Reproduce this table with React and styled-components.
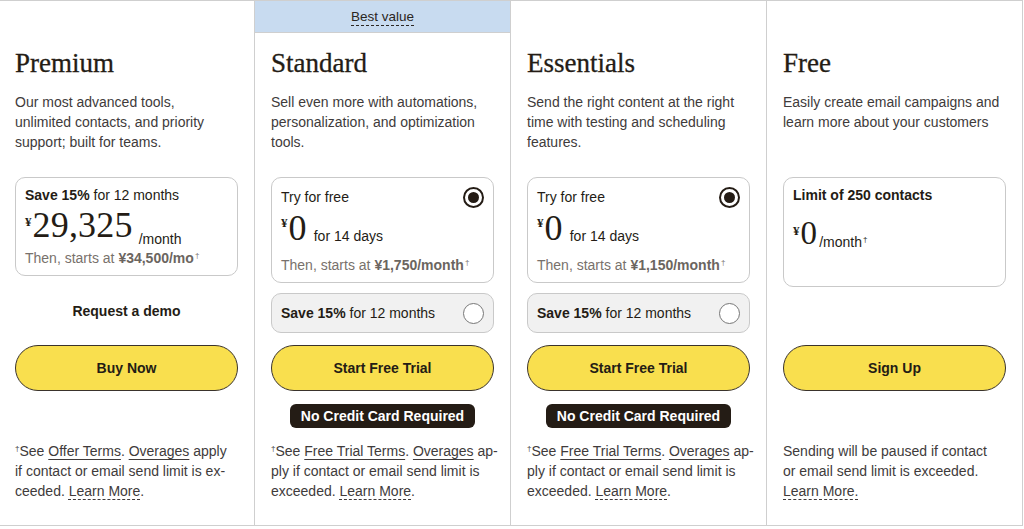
import React from "react";
import styled, { createGlobalStyle } from "styled-components";

const Global = createGlobalStyle`
  html, body { margin: 0; padding: 0; background: #fff; overflow: hidden; }
  body { font-family: "Liberation Sans", Arial, sans-serif; color: #403b3b; }
  * { box-sizing: border-box; }
`;

const Grid = styled.div`
  display: grid;
  grid-template-columns: repeat(4, 256px);
  width: 1025px;
  height: 526px;
  margin-left: -2px;
  border-top: 1px solid #cfcfcf;
  border-right: 1px solid #cfcfcf;
  border-bottom: 1px solid #cfcfcf;
`;

const Column = styled.section`
  display: flex;
  flex-direction: column;
  border-left: 1px solid #cfcfcf;
  min-width: 0;
`;

const TopSlot = styled.div`
  height: 32px;
  display: flex;
  align-items: center;
  justify-content: center;
  background: ${(p) => (p.$highlight ? "#c8dbf0" : "transparent")};
  border-bottom: 1px solid ${(p) => (p.$highlight ? "#cfcfcf" : "transparent")};
`;

const BannerText = styled.span`
  font-size: 13.5px;
  line-height: 16px;
  color: #2b2622;
  border-bottom: 1px dashed #2b2622;
  margin-top: 1px;
`;

const Body = styled.div`
  display: flex;
  flex-direction: column;
  padding: 14px 16px 0;
`;

const Title = styled.h2`
  margin: 0;
  font-family: "Liberation Serif", "Times New Roman", serif;
  font-weight: 400;
  font-size: 27px;
  line-height: 32px;
  color: #241c15;
  -webkit-text-stroke: 0.3px #241c15;
`;

const Desc = styled.p`
  margin: 13px 0 0;
  min-height: 60px;
  font-size: 14px;
  line-height: 20px;
  color: #403b3b;
  white-space: pre-line;
`;

const Options = styled.div`
  margin-top: 25px;
  height: 156px;
  display: flex;
  flex-direction: column;
`;

const Card = styled.div`
  border: 1px solid #c9c9c9;
  border-radius: 10px;
  padding: 7px 9px 7px;
  min-height: ${(p) => p.$minH || 0}px;
  display: flex;
  flex-direction: column;
`;

const SubCard = styled.div`
  margin-top: 10px;
  height: 40px;
  border: 1px solid #c9c9c9;
  border-radius: 10px;
  background: #f1f1f1;
  padding: 0 9px;
  display: flex;
  align-items: center;
  justify-content: space-between;
  font-size: 14px;
  color: #241c15;
`;

const CardHead = styled.div`
  display: flex;
  align-items: center;
  justify-content: space-between;
  min-height: ${(p) => (p.$tall ? 24 : 20)}px;
  font-size: 14px;
  line-height: 20px;
  color: #241c15;
  font-weight: ${(p) => (p.$bold ? 700 : 400)};
`;

const Strong = styled.b`
  font-weight: 700;
`;

const Radio = styled.span`
  width: 21px;
  height: 21px;
  border-radius: 50%;
  flex: none;
  border: ${(p) => (p.$checked ? "2px solid #241c15" : "1px solid #777")};
  background: #fff;
  display: flex;
  align-items: center;
  justify-content: center;
  &::after {
    content: "";
    width: 11px;
    height: 11px;
    border-radius: 50%;
    background: ${(p) => (p.$checked ? "#241c15" : "transparent")};
  }
`;

const PriceRow = styled.div`
  display: flex;
  align-items: flex-end;
  margin: ${(p) => p.$margin};
  color: #241c15;
`;

const Yen = styled.span`
  align-self: flex-start;
  font-family: "Liberation Serif", "Times New Roman", serif;
  font-weight: 700;
  font-size: 13px;
  line-height: 13px;
  margin-top: ${(p) => p.$top}px;
  margin-right: 1px;
`;

const Amount = styled.span`
  font-family: "Liberation Serif", "Times New Roman", serif;
  font-size: ${(p) => p.$size}px;
  line-height: ${(p) => p.$size}px;
  letter-spacing: 0.2px;
`;

const Suffix = styled.span`
  font-size: 14px;
  line-height: 14px;
  margin-left: ${(p) => p.$gap}px;
  margin-bottom: ${(p) => p.$drop || 0}px;
  color: #241c15;
`;

const Then = styled.div`
  font-size: 14px;
  line-height: 20px;
  color: #78716c;
  b { color: #6b6560; font-weight: 700; }
`;

const Dag = styled.sup`
  font-size: 8px;
  line-height: 0;
  vertical-align: 5px;
  margin-left: ${(p) => (p.$lead ? 0 : 1)}px;
`;

const DemoLink = styled.div`
  margin-top: 25px;
  text-align: center;
  font-size: 14px;
  line-height: 20px;
  font-weight: 700;
  color: #241c15;
`;

const CTA = styled.button`
  margin-top: 12px;
  height: 46px;
  width: 100%;
  border: 1px solid #3a332c;
  border-radius: 23px;
  background: #f9df4e;
  font-family: "Liberation Sans", Arial, sans-serif;
  font-size: 14px;
  font-weight: 700;
  color: #241c15;
  cursor: pointer;
`;

const BadgeSlot = styled.div`
  height: 50px;
  display: flex;
  align-items: center;
  justify-content: center;
`;

const Badge = styled.span`
  background: #241c15;
  color: #fff;
  font-size: 14px;
  line-height: 24px;
  height: 24px;
  padding: 0 11px;
  border-radius: 6px;
  font-weight: 700;
`;

const Foot = styled.p`
  margin: 0;
  font-size: 14px;
  line-height: 20px;
  color: #403b3b;
  white-space: nowrap;
`;

const Link = styled.a`
  color: inherit;
  text-decoration: underline;
  text-decoration-style: ${(p) => (p.$dashed ? "dashed" : "solid")};
  text-underline-offset: 3px;
  text-decoration-thickness: 1px;
`;

function TrialBox({ price }) {
  return (
    <>
      <Card>
        <CardHead $tall>
          <span>Try for free</span>
          <Radio $checked />
        </CardHead>
        <PriceRow $margin="1px 0 9px">
          <Yen $top={6}>¥</Yen>
          <Amount $size={36}>0</Amount>
          <Suffix $gap={7} $drop={3}>for 14 days</Suffix>
        </PriceRow>
        <Then>
          Then, starts at <b>¥{price}/month</b>
          <Dag>†</Dag>
        </Then>
      </Card>
      <SubCard>
        <span>
          <Strong>Save 15%</Strong> for 12 months
        </span>
        <Radio />
      </SubCard>
    </>
  );
}

const trialFoot = (
  <Foot>
    <Dag $lead>†</Dag>See <Link href="#">Free Trial Terms</Link>.{" "}
    <Link href="#">Overages</Link> ap-
    <br />
    ply if contact or email send limit is
    <br />
    exceeded. <Link href="#" $dashed>Learn More</Link>.
  </Foot>
);

const plans = [
  {
    name: "Premium",
    desc: "Our most advanced tools,\nunlimited contacts, and priority\nsupport; built for teams.",
    options: (
      <>
        <Card>
          <CardHead>
            <span>
              <Strong>Save 15%</Strong> for 12 months
            </span>
          </CardHead>
          <PriceRow $margin="2px 0 5px">
            <Yen $top={8}>¥</Yen>
            <Amount $size={36}>29,325</Amount>
            <Suffix $gap={6} $drop={-3}>/month</Suffix>
          </PriceRow>
          <Then>
            Then, starts at <b>¥34,500/mo</b>
            <Dag>†</Dag>
          </Then>
        </Card>
        <DemoLink>Request a demo</DemoLink>
      </>
    ),
    cta: "Buy Now",
    foot: (
      <Foot>
        <Dag $lead>†</Dag>See <Link href="#">Offer Terms</Link>.{" "}
        <Link href="#">Overages</Link> apply
        <br />
        if contact or email send limit is ex-
        <br />
        ceeded. <Link href="#" $dashed>Learn More</Link>.
      </Foot>
    ),
  },
  {
    name: "Standard",
    banner: "Best value",
    desc: "Sell even more with automations,\npersonalization, and optimization\ntools.",
    options: <TrialBox price="1,750" />,
    cta: "Start Free Trial",
    badge: "No Credit Card Required",
    foot: trialFoot,
  },
  {
    name: "Essentials",
    desc: "Send the right content at the right\ntime with testing and scheduling\nfeatures.",
    options: <TrialBox price="1,150" />,
    cta: "Start Free Trial",
    badge: "No Credit Card Required",
    foot: trialFoot,
  },
  {
    name: "Free",
    desc: "Easily create email campaigns and\nlearn more about your customers",
    options: (
      <Card $minH={110}>
        <CardHead $bold>
          <span>Limit of 250 contacts</span>
        </CardHead>
        <PriceRow $margin="12px 0 0">
          <Yen $top={7}>¥</Yen>
          <Amount $size={33}>0</Amount>
          <Suffix $gap={2} $drop={1}>
            /month<Dag>†</Dag>
          </Suffix>
        </PriceRow>
      </Card>
    ),
    cta: "Sign Up",
    foot: (
      <Foot>
        Sending will be paused if contact
        <br />
        or email send limit is exceeded.
        <br />
        <Link href="#" $dashed>Learn More.</Link>
      </Foot>
    ),
  },
];

export default function App() {
  return (
    <>
      <Global />
      <Grid>
        {plans.map((p) => (
          <Column key={p.name}>
            <TopSlot $highlight={!!p.banner}>
              {p.banner && <BannerText>{p.banner}</BannerText>}
            </TopSlot>
            <Body>
              <Title>{p.name}</Title>
              <Desc>{p.desc}</Desc>
              <Options>{p.options}</Options>
              <CTA>{p.cta}</CTA>
              <BadgeSlot>{p.badge && <Badge>{p.badge}</Badge>}</BadgeSlot>
              {p.foot}
            </Body>
          </Column>
        ))}
      </Grid>
    </>
  );
}
